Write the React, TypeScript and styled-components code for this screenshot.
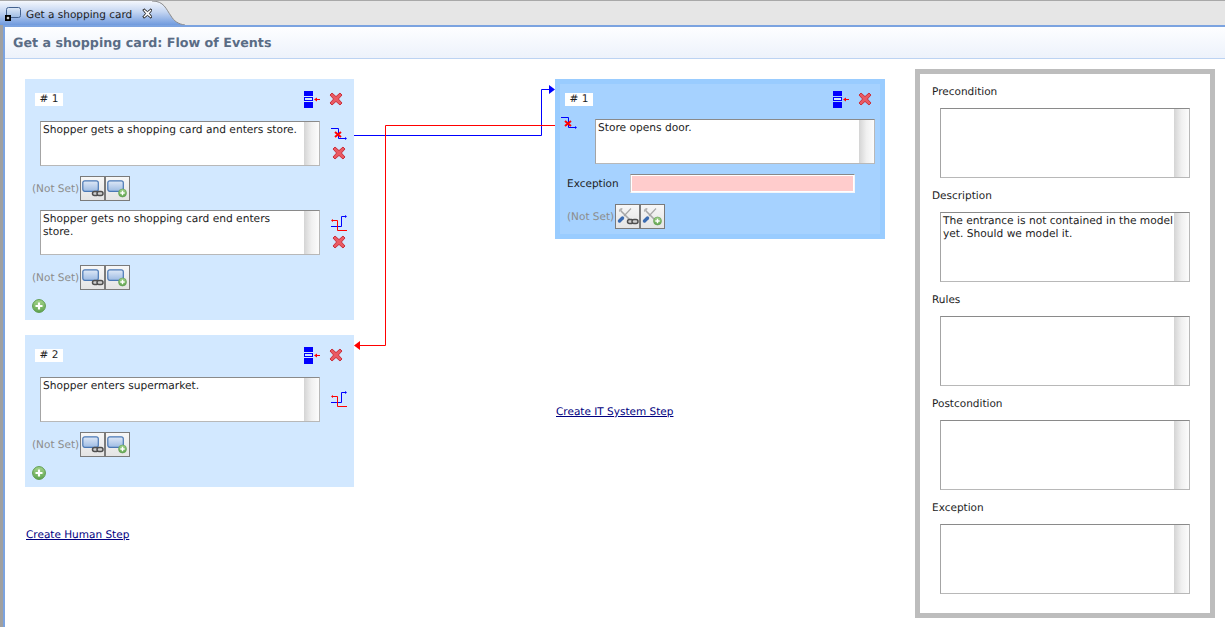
import { ReactNode } from "react";
import styled, { createGlobalStyle } from "styled-components";

const GlobalStyle = createGlobalStyle`
  html, body {
    margin: 0;
    padding: 0;
    background: #fff;
  }
  body {
    font-family: "DejaVu Sans", "Liberation Sans", sans-serif;
    font-size: 10.5px;
    text-rendering: geometricPrecision;
    color: #1c1c1c;
  }
`;

const Page = styled.div`
  width: 1225px;
  height: 627px;
  overflow: hidden;
  display: flex;
  flex-direction: column;
`;

const TabBar = styled.div`
  height: 25px;
  flex: none;
  display: flex;
  background: #e6e6e6;
  border-top: 1px solid #a8a8a8;
  box-sizing: border-box;
`;

const Tab = styled.div`
  width: 152px;
  flex: none;
  display: flex;
  align-items: center;
  padding: 1px 0 0 5px;
  box-sizing: border-box;
  background: linear-gradient(#f4f7fc 0%, #c5d6f2 45%, #6f9ade 100%);

  svg {
    flex: none;
  }
`;

const TabCurve = styled.svg`
  flex: none;
  display: block;
`;

const TabTitle = styled.span`
  width: 107px;
  flex: none;
  margin: 2px 9px 0 5px;
  white-space: nowrap;
`;

const Editor = styled.div`
  flex: 1;
  min-height: 0;
  display: flex;
  border-left: 3px solid #a0a0a0;
`;

const Frame = styled.div`
  flex: 1;
  min-width: 0;
  display: flex;
  flex-direction: column;
  border-top: 2px solid #7ba3e0;
  border-left: 2px solid #7ba3e0;
`;

const Heading = styled.div`
  height: 31px;
  flex: none;
  display: flex;
  align-items: center;
  padding-left: 8px;
  font-size: 12.7px;
  font-weight: bold;
  color: #5a6c85;
  background: linear-gradient(#fdfeff, #edf2fb);
  border-bottom: 1px solid #bcd3f2;
`;

const Canvas = styled.div`
  flex: 1;
  min-height: 0;
  position: relative;
  display: flex;
  align-items: flex-start;
  padding: 20px 0 0 20px;
`;

const Connectors = styled.svg`
  position: absolute;
  left: -5px;
  top: -59px;
  pointer-events: none;
`;

const Column = styled.div<{ $width: number }>`
  width: ${(p) => p.$width}px;
  flex: none;
  display: flex;
  flex-direction: column;
  gap: 15px;
`;

const Card = styled.div<{ $system?: boolean }>`
  box-sizing: border-box;
  width: ${(p) => (p.$system ? "330px" : "329px")};
  background: ${(p) => (p.$system ? "#a6d2ff" : "#d2e8ff")};
  border: ${(p) => (p.$system ? "5px solid #99ccff" : "none")};
  padding: ${(p) => (p.$system ? "8px 0 5px 5px" : "13px 0 7px 10px")};
`;

const CardHead = styled.div`
  display: flex;
  align-items: center;
  height: 14px;
  margin-bottom: 15px;
`;

const StepNo = styled.span`
  width: 28px;
  height: 13px;
  line-height: 13px;
  background: #fff;
  text-align: center;
  margin-right: auto;
`;

const HeadIcons = styled.div<{ $system?: boolean }>`
  display: flex;
  align-items: center;
  gap: 9px;
  margin-right: ${(p) => (p.$system ? "8px" : "11px")};
`;

const TextRow = styled.div`
  display: flex;
  margin-left: 5px;
`;

const SideIcons = styled.div<{ $top: number; $gap?: number }>`
  display: flex;
  flex-direction: column;
  align-items: center;
  width: 16px;
  margin: ${(p) => p.$top}px 0 0 11px;
  gap: ${(p) => p.$gap ?? 0}px;
`;

const TextBox = styled.div<{ $width: number; $height: number }>`
  box-sizing: border-box;
  flex: none;
  width: ${(p) => p.$width}px;
  height: ${(p) => p.$height}px;
  display: flex;
  background: #fff;
  border: 1px solid #b8b8b8;
  border-top-color: #8a8a8a;
  border-left-color: #a4a4a4;
`;

const TextBody = styled.div`
  flex: 1;
  padding: 1px 0 0 2px;
  font-size: 10.65px;
  line-height: 13px;
`;

const ScrollStrip = styled.div`
  width: 15px;
  flex: none;
  background: linear-gradient(90deg, #d4d4d4, #f0f0f0 50%, #fcfcfc);
`;

const LinkRow = styled.div<{ $system?: boolean }>`
  display: flex;
  align-items: center;
  height: 25px;
  margin: ${(p) => (p.$system ? "0" : "10px 0 9px -3px")};
`;

const NotSet = styled.span`
  width: 48px;
  flex: none;
  color: #8c8c8c;
  white-space: nowrap;
`;

const SquareButton = styled.div`
  box-sizing: border-box;
  width: 25px;
  height: 25px;
  display: flex;
  align-items: center;
  justify-content: center;
  background: linear-gradient(#f7f7f7, #e4e4e4);
  border: 1px solid #7a7a7a;
`;

const RoundAdd = styled.div`
  margin-left: -3px;
  height: 14px;
  display: flex;
`;

const SystemBody = styled.div`
  display: flex;
  margin-top: -2px;
`;

const SystemIconSlot = styled.div`
  width: 30px;
  flex: none;
  margin: -2px 0 0 -4px;
  padding-right: 4px;
`;

const ExceptionRow = styled.div`
  display: flex;
  align-items: center;
  height: 19px;
  margin: 10px 0 11px 2px;
`;

const ExceptionLabel = styled.span`
  width: 63px;
  padding-top: 1px;
`;

const ExceptionInput = styled.div`
  box-sizing: border-box;
  width: 225px;
  height: 19px;
  background: #ffcccc;
  border: 1px solid #f4f6fa;
  border-top: 1px solid #888;
  border-left-color: #c4c8cc;
  box-shadow: inset 0 0 0 1px #fff;
`;

const SystemLinks = styled.div`
  margin-left: 2px;
`;

const CreateLink = styled.a<{ $top: number; $left?: number }>`
  display: block;
  margin-top: ${(p) => p.$top}px;
  margin-left: ${(p) => p.$left ?? 0}px;
  color: #000080;
  text-decoration: underline;
  line-height: 13px;
  cursor: pointer;
`;

const DetailsPanel = styled.div`
  box-sizing: border-box;
  flex: none;
  width: 300px;
  height: 549px;
  margin: -10px 0 0 30px;
  border: 5px solid #bdbdbd;
  padding: 11px 0 0 12px;
  display: flex;
  flex-direction: column;
`;

const DetailLabel = styled.div`
  line-height: 15px;
  height: 13px;
`;

const DetailBox = styled.div`
  margin: 10px 0 11px 8px;
`;

const iconDefs = (
  <svg width="0" height="0" style={{ position: "absolute" }}>
    <defs>
      <linearGradient id="screen" x1="0" y1="0" x2="0" y2="1">
        <stop offset="0" stopColor="#dfe9f7" />
        <stop offset="1" stopColor="#9dbbe3" />
      </linearGradient>
      <linearGradient id="green" x1="0" y1="0" x2="0" y2="1">
        <stop offset="0" stopColor="#a4d48c" />
        <stop offset="1" stopColor="#5fa44f" />
      </linearGradient>
    </defs>
  </svg>
);

const DeleteIcon = () => (
  <svg width="14" height="14" viewBox="0 0 14 14">
    <path
      d="M3 1 L7 4.6 L11 1 L13 3 L9.4 7 L13 11 L11 13 L7 9.4 L3 13 L1 11 L4.6 7 L1 3 Z"
      fill="#ea5a63"
      stroke="#c9303c"
      strokeWidth="1"
      strokeLinejoin="round"
    />
  </svg>
);

const MoveIcon = () => (
  <svg width="16" height="17" viewBox="0 0 16 17">
    <rect x="0" y="0" width="9" height="5" fill="#0000ff" />
    <rect x="0.5" y="6.5" width="8" height="3" fill="#d2e8ff" stroke="#0000ff" />
    <rect x="0" y="11" width="9" height="6" fill="#0000ff" />
    <path d="M11 8.5 H16" stroke="#ff0000" />
    <path d="M10 8.5 L13 6.5 V10.5 Z" fill="#ff0000" />
  </svg>
);

const FlowCrossIcon = () => (
  <svg width="16" height="13" viewBox="0 0 16 13">
    <path d="M0 .5 H7.5 V10.5 H15" stroke="#0000ff" fill="none" />
    <path d="M14 9 L16 10.5 L14 12 Z" fill="#0000ff" />
    <path d="M4 4 L10 9 M10 4 L4 9" stroke="#ff0000" strokeWidth="2" />
  </svg>
);

const FlowSplitIcon = () => (
  <svg width="16" height="17" viewBox="0 0 16 17">
    <path d="M0 11.5 H10.5 V1.5 H15" stroke="#0000ff" fill="none" />
    <path d="M14 0 L16 1.5 L14 3 Z" fill="#0000ff" />
    <path d="M16 15.5 H6.5 V5.5 H1" stroke="#ff0000" fill="none" />
    <path d="M2 4 L0 5.5 L2 7 Z" fill="#ff0000" />
  </svg>
);

const AddBadge = ({ x, y }: { x: number; y: number }) => (
  <g transform={`translate(${x} ${y})`}>
    <circle r="4" fill="url(#green)" stroke="#5c9a4d" strokeWidth=".6" />
    <path d="M-2.2 0 H2.2 M0 -2.2 V2.2" stroke="#fff" strokeWidth="1.4" />
  </g>
);

const ChainBadge = () => (
  <g fill="#cfcfcf" stroke="#4f4f4f" strokeWidth="1.5">
    <rect x="10.5" y="12.5" width="6" height="4" rx="2" />
    <rect x="15" y="12.5" width="6" height="4" rx="2" />
  </g>
);

const ScreenShape = () => (
  <rect x=".8" y="1.8" width="15.5" height="10.5" rx="2" fill="url(#screen)" stroke="#4a78b5" strokeWidth="1.2" />
);

const ToolShape = () => (
  <g>
    <path d="M14 1.5 L7 9" stroke="#a6a6a6" strokeWidth="1.1" />
    <path d="M4 4 L12.5 12.5" stroke="#a6a6a6" strokeWidth="1.6" />
    <path d="M5.5 1 C2.5 .5 1.5 3 2 5 L5 3.5 Z" fill="#b4b4b4" />
    <path d="M2.5 14 L5.5 11" stroke="#3a6ab0" strokeWidth="3.4" strokeLinecap="round" />
  </g>
);

const ActionGlyph = ({ kind, tool }: { kind: "link" | "add"; tool?: boolean }) => (
  <svg width="22" height="19" viewBox="0 0 22 19">
    {tool ? <ToolShape /> : <ScreenShape />}
    {kind === "link" ? <ChainBadge /> : <AddBadge x={15.5} y={14} />}
  </svg>
);

const PlusCircle = () => (
  <svg width="14" height="14" viewBox="0 0 14 14">
    <circle cx="7" cy="7" r="6.4" fill="url(#green)" stroke="#5c9a4d" />
    <path d="M3.5 7 H10.5 M7 3.5 V10.5" stroke="#fff" strokeWidth="2.2" />
  </svg>
);

const TabFileIcon = () => (
  <svg width="16" height="16" viewBox="0 0 16 16">
    <rect x="1.5" y="1.5" width="14" height="10" rx="2" fill="url(#screen)" stroke="#44628f" />
    <rect x="0" y="9" width="6" height="6" fill="#000" />
    <path d="M1.5 12 H4.5 M3 10.5 V13.5 M2 11 L4 13 M4 11 L2 13" stroke="#fff" strokeWidth=".6" />
  </svg>
);

const TabCloseIcon = () => (
  <svg width="11" height="11" viewBox="0 0 11 11">
    <path
      d="M2 .8 L5.5 3.6 L9 .8 L10.2 2 L7.4 5.5 L10.2 9 L9 10.2 L5.5 7.4 L2 10.2 L.8 9 L3.6 5.5 L.8 2 Z"
      fill="#fff"
      stroke="#1c1c1c"
      strokeWidth="1"
    />
  </svg>
);

function StepText({ width = 280, height = 45, children }: { width?: number; height?: number; children?: ReactNode }) {
  return (
    <TextBox $width={width} $height={height}>
      <TextBody>{children}</TextBody>
      <ScrollStrip />
    </TextBox>
  );
}

function Links({ tool, system }: { tool?: boolean; system?: boolean }) {
  return (
    <LinkRow $system={system}>
      <NotSet>(Not Set)</NotSet>
      <SquareButton>
        <ActionGlyph kind="link" tool={tool} />
      </SquareButton>
      <SquareButton>
        <ActionGlyph kind="add" tool={tool} />
      </SquareButton>
    </LinkRow>
  );
}

const details: { label: string; text?: string }[] = [
  { label: "Precondition" },
  { label: "Description", text: "The entrance is not contained in the model yet. Should we model it." },
  { label: "Rules" },
  { label: "Postcondition" },
  { label: "Exception" },
];

export default function App() {
  return (
    <Page>
      <GlobalStyle />
      {iconDefs}
      <TabBar>
        <Tab>
          <TabFileIcon />
          <TabTitle>Get a shopping card</TabTitle>
          <TabCloseIcon />
        </Tab>
        <TabCurve width="33" height="24" viewBox="0 0 33 24">
          <defs>
            <linearGradient id="tabfill" x1="0" y1="0" x2="0" y2="1">
              <stop offset="0" stopColor="#f4f7fc" />
              <stop offset=".45" stopColor="#c5d6f2" />
              <stop offset="1" stopColor="#6f9ade" />
            </linearGradient>
          </defs>
          <path d="M0 0 C12 0 14 8 19 15 C22 20 26 23 33 24 H0 Z" fill="url(#tabfill)" />
          <path d="M0 0 C12 0 14 8 19 15 C22 20 26 23 33 24" fill="none" stroke="#8c8c8c" />
        </TabCurve>
      </TabBar>
      <Editor>
        <Frame>
          <Heading>Get a shopping card: Flow of Events</Heading>
          <Canvas>
            <Connectors width="1225" height="627" viewBox="0 0 1225 627">
              <path d="M354 135.5 H541.5 V89.5 H550" stroke="#0000ff" strokeWidth="1" fill="none" />
              <path d="M549 85 L555 89.5 L549 94 Z" fill="#0000ff" />
              <path d="M555 125.5 H385.5 V345.5 H359" stroke="#ff0000" strokeWidth="1" fill="none" />
              <path d="M360 341 L354 345.5 L360 350 Z" fill="#ff0000" />
            </Connectors>
            <Column $width={530}>
              <Card>
                <CardHead>
                  <StepNo># 1</StepNo>
                  <HeadIcons>
                    <MoveIcon />
                    <DeleteIcon />
                  </HeadIcons>
                </CardHead>
                <TextRow>
                  <StepText>Shopper gets a shopping card and enters store.</StepText>
                  <SideIcons $top={7} $gap={5}>
                    <FlowCrossIcon />
                    <DeleteIcon />
                  </SideIcons>
                </TextRow>
                <Links />
                <TextRow>
                  <StepText>
                    Shopper gets no shopping card end enters
                    <br />
                    store.
                  </StepText>
                  <SideIcons $top={5} $gap={3}>
                    <FlowSplitIcon />
                    <DeleteIcon />
                  </SideIcons>
                </TextRow>
                <Links />
                <RoundAdd>
                  <PlusCircle />
                </RoundAdd>
              </Card>
              <Card>
                <CardHead>
                  <StepNo># 2</StepNo>
                  <HeadIcons>
                    <MoveIcon />
                    <DeleteIcon />
                  </HeadIcons>
                </CardHead>
                <TextRow>
                  <StepText>Shopper enters supermarket.</StepText>
                  <SideIcons $top={14}>
                    <FlowSplitIcon />
                  </SideIcons>
                </TextRow>
                <Links />
                <RoundAdd>
                  <PlusCircle />
                </RoundAdd>
              </Card>
              <CreateLink $top={27} $left={1}>Create Human Step</CreateLink>
            </Column>
            <Column $width={330}>
              <Card $system>
                <CardHead>
                  <StepNo># 1</StepNo>
                  <HeadIcons $system>
                    <MoveIcon />
                    <DeleteIcon />
                  </HeadIcons>
                </CardHead>
                <SystemBody>
                  <SystemIconSlot>
                    <FlowCrossIcon />
                  </SystemIconSlot>
                  <StepText>Store opens door.</StepText>
                </SystemBody>
                <ExceptionRow>
                  <ExceptionLabel>Exception</ExceptionLabel>
                  <ExceptionInput />
                </ExceptionRow>
                <SystemLinks>
                  <Links tool system />
                </SystemLinks>
              </Card>
              <CreateLink $top={152} $left={1}>Create IT System Step</CreateLink>
            </Column>
            <DetailsPanel>
              {details.map((d) => (
                <div key={d.label}>
                  <DetailLabel>{d.label}</DetailLabel>
                  <DetailBox>
                    <StepText width={250} height={70}>{d.text}</StepText>
                  </DetailBox>
                </div>
              ))}
            </DetailsPanel>
          </Canvas>
        </Frame>
      </Editor>
    </Page>
  );
}
